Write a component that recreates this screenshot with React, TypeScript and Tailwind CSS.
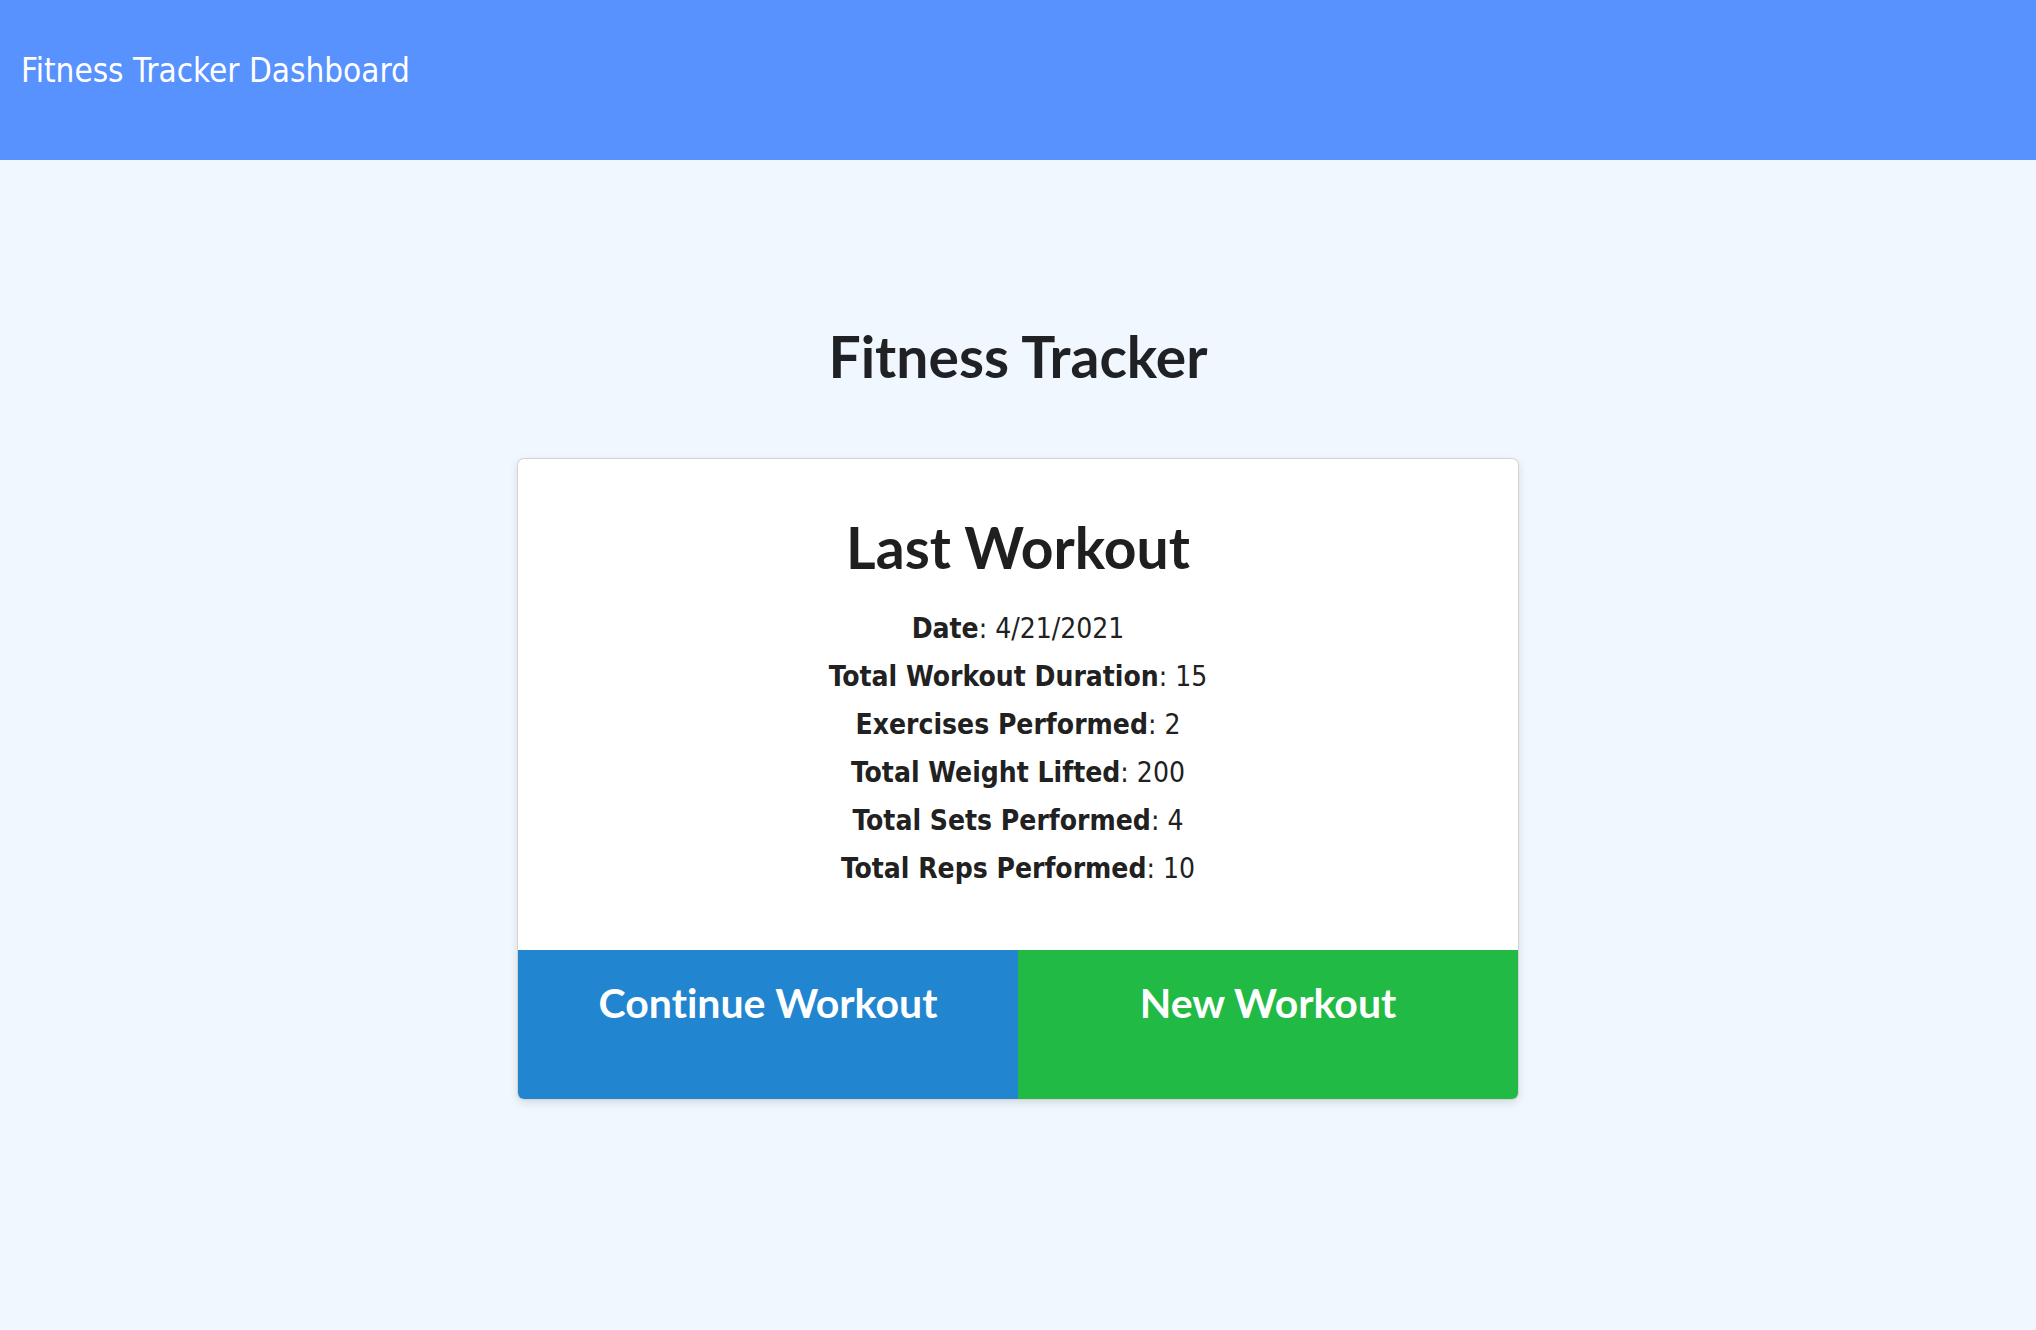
const stats = [
  { label: 'Date', value: '4/21/2021' },
  { label: 'Total Workout Duration', value: '15' },
  { label: 'Exercises Performed', value: '2' },
  { label: 'Total Weight Lifted', value: '200' },
  { label: 'Total Sets Performed', value: '4' },
  { label: 'Total Reps Performed', value: '10' },
];

const tahoma = { fontFamily: '"DejaVu Sans Condensed", "DejaVu Sans", sans-serif' };
const lato = { fontFamily: 'Lato, sans-serif', fontVariantLigatures: 'none' as const };

export default function App() {
  return (
    <div className="min-h-[1330px] bg-[#f0f7ff] text-[#212121]" style={tahoma}>
      {/* top bar */}
      <header className="h-[160px] bg-[#5892fe] pt-[51px] pl-[21px]">
        <span className="text-[33px] leading-[40px] text-white" style={tahoma}>
          Fitness Tracker Dashboard
        </span>
      </header>

      <main className="flex flex-col items-center">
        <h1 className="mt-[161px] text-[57px] leading-[70px] font-bold text-[#1f2124]" style={lato}>
          Fitness Tracker
        </h1>

        <div className="mt-[68px] w-[1000px] overflow-hidden rounded-[6px] bg-white shadow-[0_0_0_1px_#d4d4d5,0_3px_10px_rgba(0,0,0,0.14)]">
          <div className="flex flex-col items-center pt-[54px] pb-[57px]">
            <h2 className="text-[57px] leading-[68px] font-bold text-[#1f1f1f]" style={lato}>
              Last Workout
            </h2>
            <div className="mt-[24px] flex flex-col items-center">
              {stats.map((s) => (
                <p key={s.label} className="text-[28px] leading-[48px]">
                  <span className="font-bold">{s.label}</span>: {s.value}
                </p>
              ))}
            </div>
          </div>

          <div className="grid grid-cols-2">
            <button
              className="h-[149px] bg-[#2185d0] pt-[28px] text-[41px] leading-[50px] font-bold text-white flex justify-center items-start"
              style={lato}
            >
              Continue Workout
            </button>
            <button
              className="h-[149px] bg-[#21ba45] pt-[28px] text-[41px] leading-[50px] font-bold text-white flex justify-center items-start"
              style={lato}
            >
              New Workout
            </button>
          </div>
        </div>
      </main>
    </div>
  );
}
